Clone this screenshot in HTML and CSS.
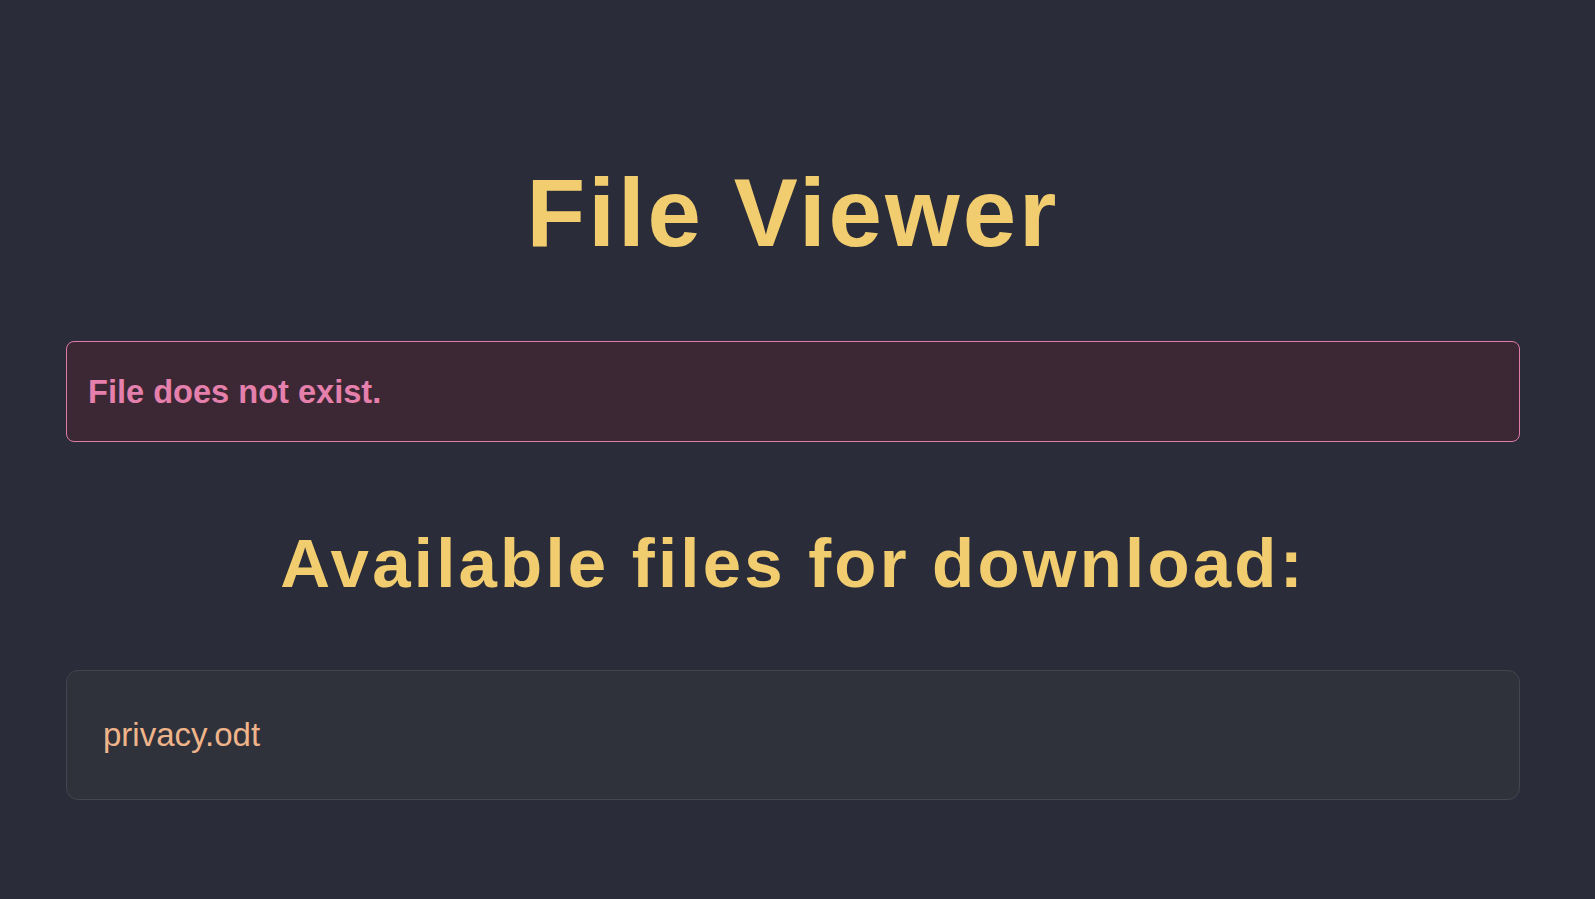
FILE: index.html
```html
<!DOCTYPE html>
<html lang="en">
<head>
  <meta charset="utf-8">
  <title>File Viewer</title>
  <link rel="stylesheet" href="styles.css">
</head>
<body>
  <main class="page">
    <h1 class="title">File Viewer</h1>

    <!-- error message -->
    <div class="alert">File does not exist.</div>

    <h2 class="subtitle">Available files for download:</h2>

    <!-- file list -->
    <ul class="files">
      <li class="file">privacy.odt</li>
    </ul>
  </main>
</body>
</html>
```

FILE: styles.css
```css
html { background-color: #2a2d39; }
body { margin: 0; font-family: "Liberation Sans", Arial, sans-serif; background-color: #2a2d39; color: #f1cd6f; }
.page { padding: 155px 75px 60px 66px; }
.title { margin: 0 0 71px; font-size: 96px; line-height: 1.2; font-weight: bold; letter-spacing: 3px; text-align: center; color: #f1cd6f; }
.alert { height: 101px; box-sizing: border-box; padding: 0 21px; display: flex; align-items: center; border: 1px solid #e07aa6; border-radius: 8px; background-color: #3c2834; color: #e57fab; font-size: 32.6px; font-weight: bold; margin-bottom: 81px; }
.subtitle { margin: 0 0 64px; font-size: 69px; line-height: 1.2; font-weight: bold; letter-spacing: 3.2px; text-align: center; color: #f1cd6f; }
.files { list-style: none; margin: 0; padding: 0; border: 1px solid #44464e; border-radius: 12px; background-color: #2f323b; }
.file { padding: 38px 36px 39px; font-size: 33px; line-height: 51px; color: #f0b48a; }
```
